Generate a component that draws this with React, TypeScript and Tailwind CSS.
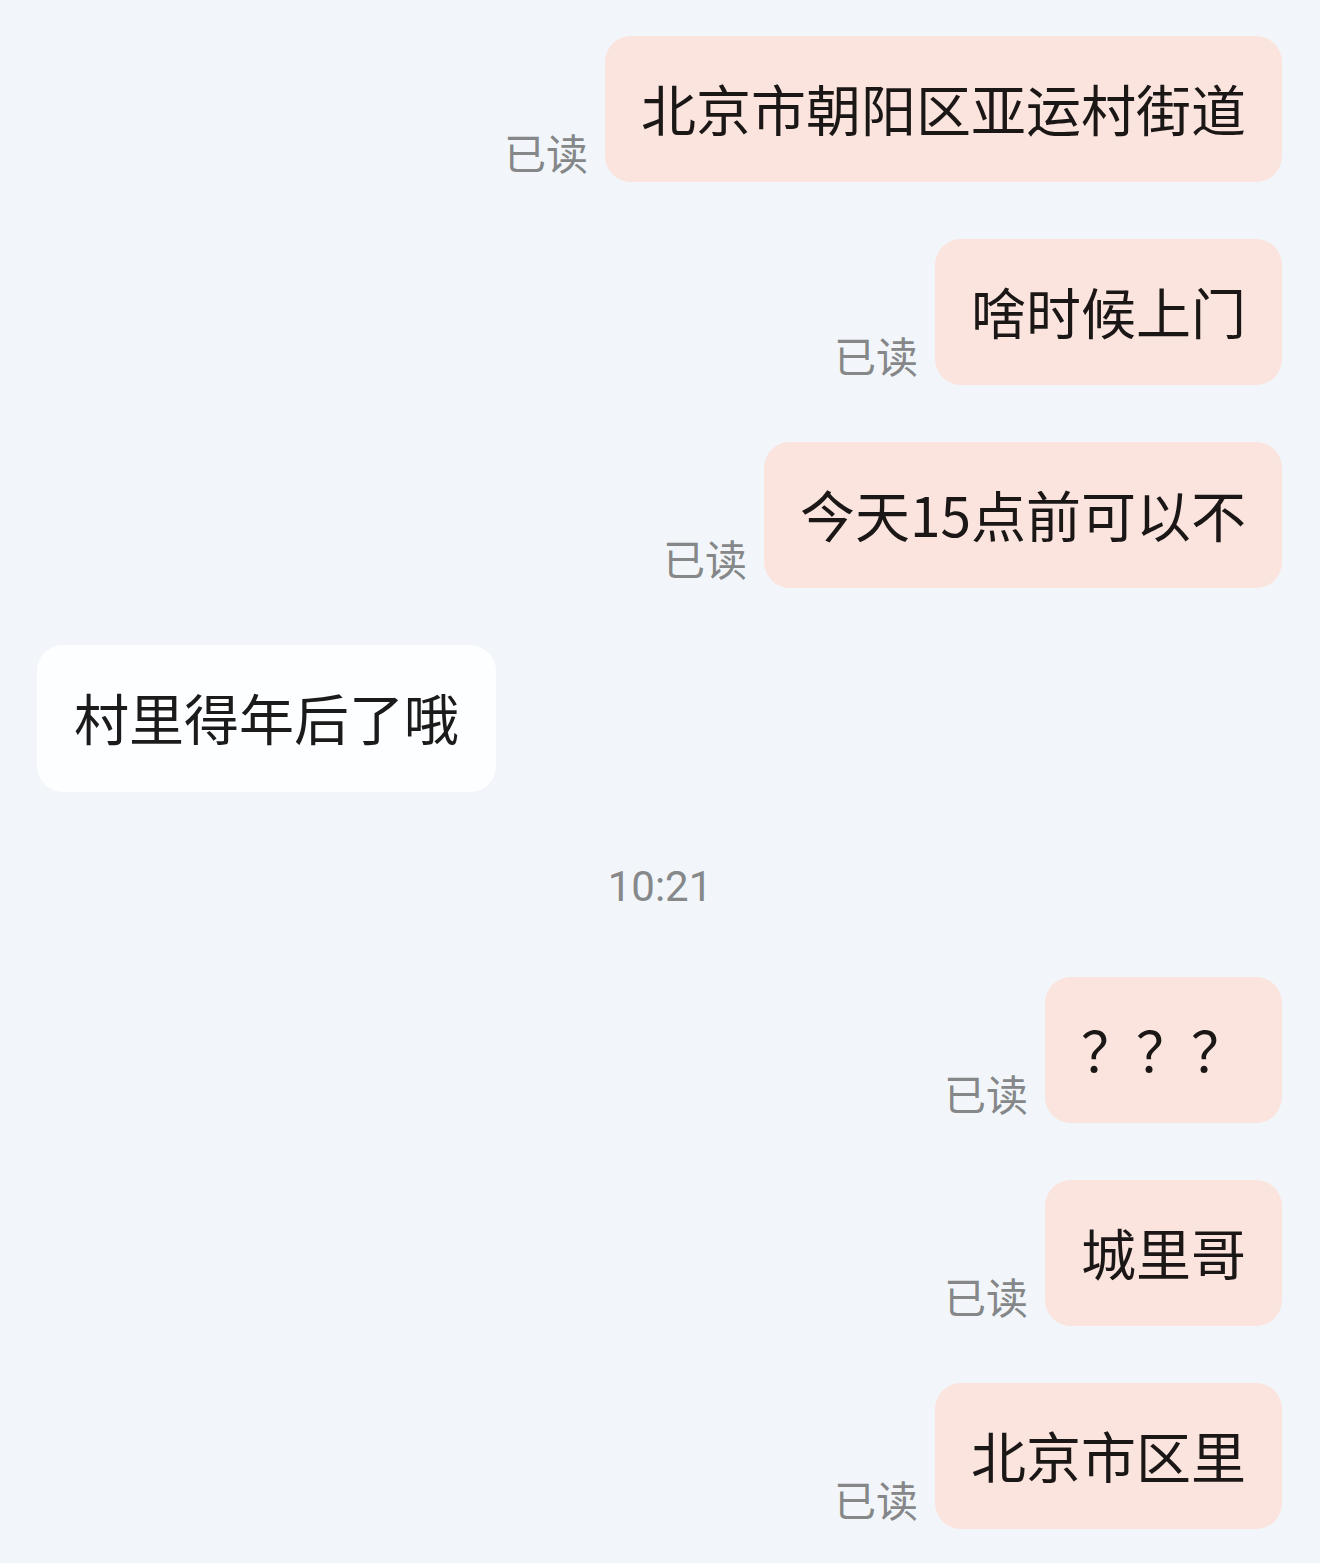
import React from "react";

const cjk = { fontFamily: '"Noto Sans CJK SC", "Noto Sans", sans-serif' };

function Sent({ text }: { text: string }) {
  return (
    <div className="flex justify-end items-end gap-[17px]">
      <span className="text-[42px] leading-none text-[#858789] mb-[9px]" style={cjk}>
        已读
      </span>
      <div
        className="h-[146px] flex items-center px-[36px] pb-[4px] rounded-[26px] bg-[#fae4dd] text-[55px] leading-none text-[#1b1716] whitespace-nowrap"
        style={cjk}
      >
        {text}
      </div>
    </div>
  );
}

function Received({ text }: { text: string }) {
  return (
    <div className="flex justify-start">
      <div
        className="h-[147px] flex items-center px-[37px] pb-[4px] rounded-[26px] bg-[#fdfeff] text-[55px] leading-none text-[#1b1b1b] whitespace-nowrap"
        style={cjk}
      >
        {text}
      </div>
    </div>
  );
}

export default function App() {
  return (
    <div className="w-[1320px] h-[1563px] bg-[#f2f6fa] overflow-hidden">
      <div className="flex flex-col gap-[57px] pt-[36px] pl-[37px] pr-[38px]">
        <Sent text="北京市朝阳区亚运村街道" />
        <Sent text="啥时候上门" />
        <Sent text="今天15点前可以不" />
        <Received text="村里得年后了哦" />
        <div
          className="h-[50px] flex items-center justify-center mt-[13px] mb-[8px] text-[42px] leading-none text-[#86888a] pl-[1px]"
          style={{ fontFamily: 'Roboto, "Noto Sans", sans-serif' }}
        >
          10:21
        </div>
        <Sent text="？？？" />
        <Sent text="城里哥" />
        <Sent text="北京市区里" />
      </div>
    </div>
  );
}
